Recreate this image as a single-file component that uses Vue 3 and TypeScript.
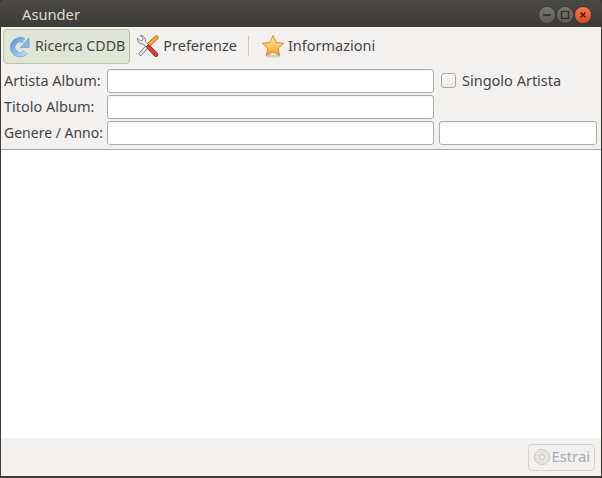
<script setup lang="ts">
const rows = [
  { label: 'Artista Album:' },
  { label: 'Titolo Album:' },
  { label: 'Genere / Anno:' },
]
</script>

<template>
  <div class="window">
    <header class="titlebar">
      <span class="title">Asunder</span>
      <div class="controls">
        <span class="wbtn">
          <svg viewBox="0 0 16 16"><path d="M4 8h8" stroke="#2f2e2a" stroke-width="1.5"/></svg>
        </span>
        <span class="wbtn">
          <svg viewBox="0 0 16 16"><rect x="4.5" y="4.5" width="7" height="7" fill="none" stroke="#2f2e2a" stroke-width="1.3"/></svg>
        </span>
        <span class="wbtn close">
          <svg viewBox="0 0 16 16"><path d="M5.5 5.5l5 5M10.5 5.5l-5 5" stroke="#4a2010" stroke-width="1.6"/></svg>
        </span>
      </div>
    </header>

    <div class="body">
      <div class="toolbar">
        <button class="tool active">
          <svg width="24" height="24" viewBox="0 0 24 24">
            <defs>
              <linearGradient id="refresh" x1="0" y1="0" x2="1" y2="1">
                <stop offset="0" stop-color="#5f9ad8"/>
                <stop offset=".55" stop-color="#93bde8"/>
                <stop offset="1" stop-color="#b8d3f0"/>
              </linearGradient>
            </defs>
            <path d="M17.6 18.2A7.4 7.4 0 1 1 15.8 6.8" fill="none" stroke="#6a9ed6" stroke-width="5.4" />
            <path d="M17.6 18.2A7.4 7.4 0 1 1 15.8 6.8" fill="none" stroke="url(#refresh)" stroke-width="4.2" />
            <path d="M21 4V13.5H12.5z" fill="#8bb6e6" stroke="#6a9ed6" stroke-width=".8" stroke-linejoin="round"/>
          </svg>
          <span class="label cddb">Ricerca CDDB</span>
        </button>
        <button class="tool">
          <svg width="24" height="24" viewBox="0 0 24 24">
            <path d="M12 11.5L4.5 20" stroke="#70736f" stroke-width="3.6" stroke-linecap="round"/>
            <path d="M12 11.5L4.5 20" stroke="#e8e9e6" stroke-width="2.2" stroke-linecap="round"/>
            <path d="M12.5 11L20.5 3.5" stroke="#b06e1e" stroke-width="4.4" stroke-linecap="round"/>
            <path d="M12.5 11L20.5 3.5" stroke="#f2a842" stroke-width="3" stroke-linecap="round"/>
            <path d="M4.5 1.4l2.6 2.8-.6 2.2-2.2.6L1.4 4.2A5 5 0 0 0 7.2 10L10 13 12.4 10.6 9.4 7.4A5 5 0 0 0 4.5 1.4z" fill="#eceded" stroke="#70736f" stroke-width=".9" stroke-linejoin="round"/>
            <path d="M12.6 13L20 20.6" stroke="#962420" stroke-width="4.6" stroke-linecap="round"/>
            <path d="M12.6 13L20 20.6" stroke="#d8403a" stroke-width="3.2" stroke-linecap="round"/>
          </svg>
          <span class="label">Preferenze</span>
        </button>
        <span class="sep"></span>
        <button class="tool">
          <svg width="24" height="24" viewBox="0 0 24 24">
            <defs>
              <linearGradient id="star" x1="0" y1="0" x2="0" y2="1">
                <stop offset="0" stop-color="#fdeaa0"/>
                <stop offset=".6" stop-color="#fbc25a"/>
                <stop offset="1" stop-color="#f2952a"/>
              </linearGradient>
            </defs>
            <ellipse cx="12" cy="22" rx="8" ry="1.6" fill="#000" opacity=".14"/>
            <path d="M12 1.5l3.2 7 7.5.8-5.6 5 1.6 7.2L12 18l-6.7 3.5 1.6-7.2-5.6-5 7.5-.8z" fill="url(#star)" stroke="#dc8f28" stroke-width="1" stroke-linejoin="round"/>
          </svg>
          <span class="label">Informazioni</span>
        </button>
      </div>

      <div class="form">
        <label class="lab">{{ rows[0].label }}</label>
        <input class="field" type="text" />
        <label class="check"><span class="box"></span><span>Singolo Artista</span></label>

        <label class="lab">{{ rows[1].label }}</label>
        <input class="field" type="text" />
        <span></span>

        <label class="lab tight">{{ rows[2].label }}</label>
        <input class="field" type="text" />
        <input class="field" type="text" />
      </div>

      <main class="list"></main>

      <footer class="footer">
        <button class="extract">
          <svg width="18" height="18" viewBox="0 0 18 18">
            <circle cx="9" cy="9" r="7.6" fill="#e6e5e2" stroke="#c9c8c4"/>
            <circle cx="9" cy="9" r="2.4" fill="#f3f2f0" stroke="#c4c3bf"/>
          </svg>
          <span class="label">Estrai</span>
        </button>
      </footer>
    </div>
  </div>
</template>

<style>
html, body { margin: 0; padding: 0; background: #3c3b37; }
</style>

<style scoped>
.window {
  width: 602px;
  height: 478px;
  display: flex;
  flex-direction: column;
  font-family: "Noto Sans", "Open Sans", sans-serif;
  font-size: 14.5px;
  color: #454545;
  overflow: hidden;
  background: #3c3b37;
}
.titlebar {
  height: 27px;
  flex: none;
  display: flex;
  align-items: center;
  justify-content: space-between;
  background: linear-gradient(#4a4944, #3c3b37);
  border-radius: 5px 5px 0 0;
  padding: 0 11px 0 22px;
  box-sizing: border-box;
}
.title { color: #dfdbd2; font-size: 14.7px; }
.controls { display: flex; gap: 2px; margin-top: 2px; }
.wbtn {
  width: 16px;
  height: 16px;
  border-radius: 50%;
  background: linear-gradient(#777672, #5c5b57);
  box-shadow: 0 0 0 1px #3a3935;
  display: flex;
  align-items: center;
  justify-content: center;
}
.wbtn svg { width: 16px; height: 16px; }
.close { background: linear-gradient(#f77a4a, #df4a1c); }
.body {
  flex: 1;
  margin: 0 1px 2px;
  display: flex;
  flex-direction: column;
  background: #f2f1f0;
  min-height: 0;
}
.toolbar {
  height: 38px;
  flex: none;
  display: flex;
  align-items: center;
  padding: 0 0 0 2px;
  box-sizing: border-box;
}
.tool {
  height: 35px;
  display: flex;
  align-items: center;
  gap: 3px;
  padding: 0 4px 0 5px;
  background: none;
  border: 1px solid transparent;
  border-radius: 4px;
  font: inherit;
  color: inherit;
}
.tool.active {
  background: #e0e5d5;
  border-color: #b8c2a4;
  padding: 0 4px 0 4px;
}
.label { padding-bottom: 2px; }
.cddb { font-size: 14.2px; }
.tight { font-size: 14px; }
.tool svg { flex: none; }
.sep {
  width: 1px;
  height: 20px;
  background: #c9c8c5;
  margin: 0 6px;
}
.form {
  display: grid;
  grid-template-columns: 98px 327px 158px;
  grid-auto-rows: 24px;
  column-gap: 5px;
  row-gap: 2px;
  padding: 4px 0 4px 3px;
  flex: none;
  align-items: center;
  border-bottom: 1px solid #a8a7a3;
  height: 85px;
  box-sizing: border-box;
}
.lab { white-space: nowrap; padding-bottom: 2px; }
.field {
  height: 24px;
  box-sizing: border-box;
  border: 1px solid #aeaca8;
  border-radius: 3px;
  background: #fff;
  padding: 0 4px;
  margin: 0;
  width: 100%;
  font: inherit;
  box-shadow: inset 0 1px 1px rgba(0,0,0,.06);
}
.check { display: flex; align-items: center; gap: 6px; padding: 0 0 2px 2px; white-space: nowrap; }
.box {
  width: 13px;
  height: 13px;
  border: 1px solid #a9a7a3;
  border-radius: 3px;
  background: linear-gradient(#fafafa, #ecebe9);
}
.list { flex: 1; background: #fff; }
.footer {
  height: 38px;
  flex: none;
  display: flex;
  align-items: center;
  justify-content: flex-end;
  padding: 0 6px 0 0;
  box-sizing: border-box;
}
.extract {
  height: 27px;
  display: flex;
  align-items: center;
  gap: 0;
  padding: 0 4px;
  font: inherit;
  font-size: 14.8px;
  color: #a6acb3;
  background: #f2f1f0;
  border: 1px solid #d5d4d0;
  border-radius: 4px;
}
</style>
